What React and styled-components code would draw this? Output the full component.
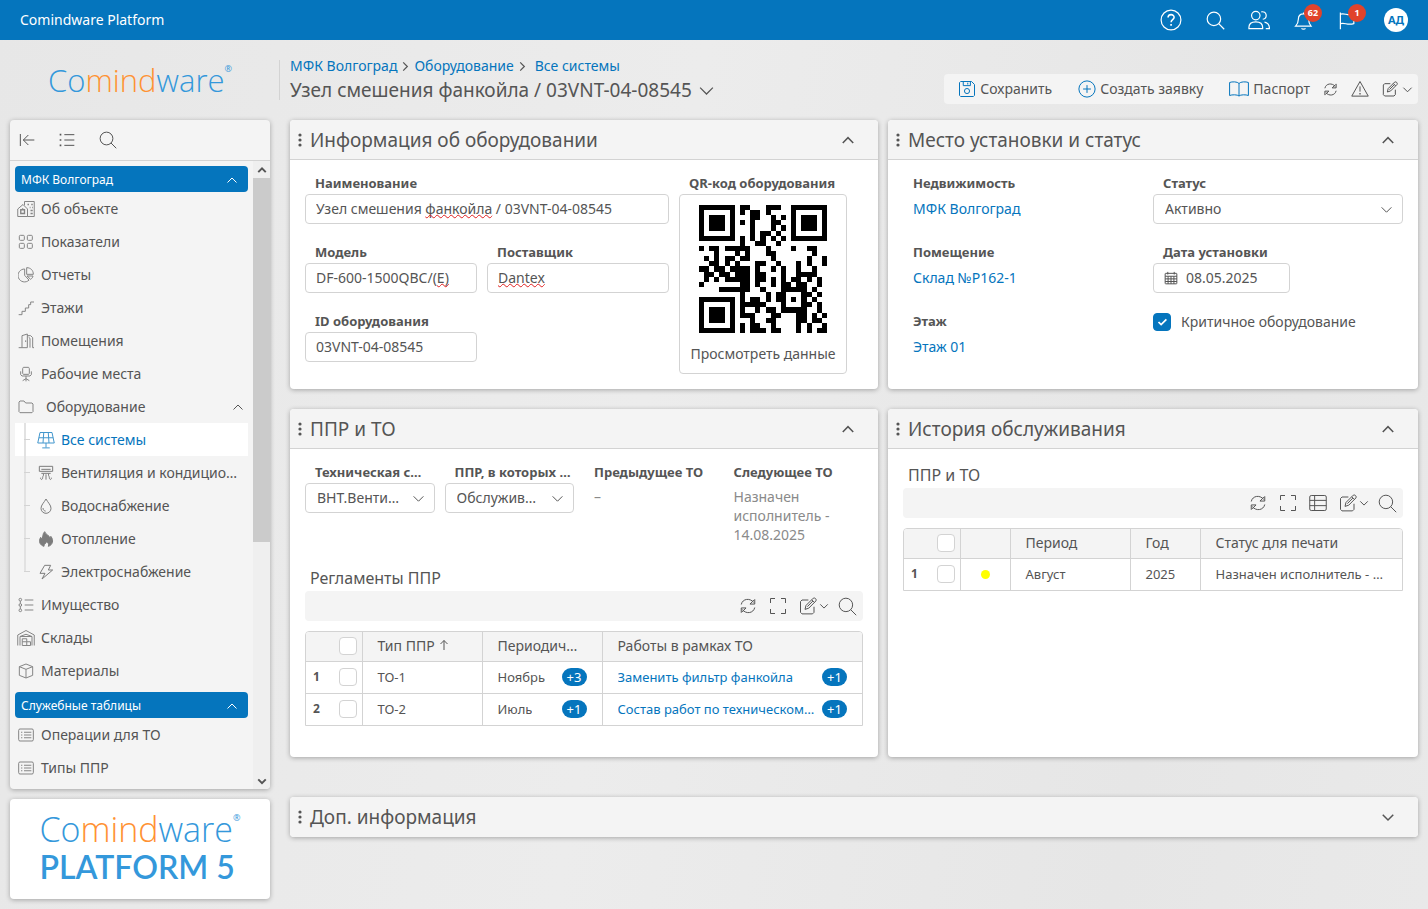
import styled, { createGlobalStyle, css } from 'styled-components';

const blue = '#0575bd';
const ink = '#555555';
const line = '#d3d3d3';
const soft = '#f4f4f4';
const font = '"Noto Sans", "Open Sans", sans-serif';

const iconPaths = {
  help: (
    <>
      <circle cx="12" cy="12" r="10.8" />
      <path d="M8.8 9.4c0-4.4 6.6-4.2 6.6-.4 0 2.6-3.3 2.6-3.3 5.4" strokeWidth="1.7" />
      <path d="M12.1 16.4v1.8" strokeWidth="1.8" />
    </>
  ),
  search: (
    <>
      <circle cx="10" cy="10" r="8.5" />
      <path d="M16 16l7 7" />
    </>
  ),
  users: (
    <>
      <circle cx="8.5" cy="7.2" r="4.6" />
      <path d="M1 21.5v-1.2C1 16 4 14 8.5 14s7.5 2 7.5 6.3v1.2zM14.5 3.2c6-1.6 7.4 6.8 1.6 8M18 14.4c3.6.6 5.4 2.8 5.4 7.1h-4" />
    </>
  ),
  bell: (
    <path d="M2 19h19.5c-2.2-2.6-3-4.6-3-8.6C18.5 6 16 3.6 12 3.6S5.5 6 5.5 10.4c0 4-1 6-3.5 8.6zM12 3.6V2M9.5 22c1 1.3 4 1.3 5 0" />
  ),
  flag: (
    <path d="M3 2v21M3 4c6-2 8 2.5 17 0v12c-9 2.5-11-2-17 0" />
  ),
  save: (
    <>
      <path d="M3.5 2H18l4 4v14.5L20.5 22h-17L2 20.5v-17z" />
      <path d="M7 2v5.5h9.5V2M13 3.5V6" />
      <circle cx="12" cy="14.7" r="3.4" />
    </>
  ),
  plus: (
    <>
      <circle cx="12" cy="12" r="10.8" />
      <path d="M12 6.8v10.4M6.8 12h10.4" />
    </>
  ),
  refresh: (
    <path d="M3 10C4.6 2.2 14.6.8 19.6 7.2M21 3v6.4h-6.4L20 4.2M21 14c-1.6 7.8-11.6 9.2-16.6 2.8M3 21v-6.4h6.4L4 19.8" />
  ),
  warning: (
    <>
      <path d="M12 2L23 21.5H1zM12 8.5v7" />
      <path d="M12 17.2v2" strokeWidth="1.8" />
    </>
  ),
  edit: (
    <>
      <path d="M12.5 4H4L2 6v14.5L4 22.5h14l2-2V13" />
      <path d="M8 16.5l1.3-5.2L19 1.6c2-1.3 5 1.6 3.6 3.6l-9.6 9.7zM17 3.8l3.5 3.5M18.5 5.4l-7.3 7.4" />
    </>
  ),
  expand: (
    <path d="M2 8V2h6M16 2h6v6M22 16v6h-6M8 22H2v-6" />
  ),
  grid: (
    <>
      <rect x="1" y="2" width="22" height="20" rx="2" />
      <path d="M1 8.5h22M1 15.5h22M7.5 2v20" />
    </>
  ),
  collapse: <path d="M2 3v18M23 12H6.5M14 4.5L6.5 12l7.5 7.5" />,
  list: (
    <>
      <path d="M8 4h15M8 12h15M8 20h15" />
      <path d="M1 4h2.5M1 12h2.5M1 20h2.5" strokeWidth="2.6" />
    </>
  ),
  building: (
    <>
      <path d="M1 22V12l7-6 6 6v10zM10 7V2h13v20h-9" />
      <path d="M5 13h5v5H5zM7.5 13v-2M14 6h2M19 6h2M17 10h1M20 10h1M18 14h3M18 18h3" strokeWidth="1.8" />
    </>
  ),
  tiles: (
    <>
      <rect x="2" y="2" width="7.5" height="7.5" rx="1.5" />
      <rect x="14" y="2" width="7.5" height="7.5" rx="1.5" />
      <rect x="2" y="14" width="7.5" height="7.5" rx="1.5" />
      <rect x="14" y="14" width="7.5" height="7.5" rx="1.5" />
    </>
  ),
  pie: (
    <path d="M10 3a9.7 9.7 0 1 0 6.5 16.7L10 12.5zM13 1v10h10C23 5 19 1 13 1zM13.5 13.5l5.5 5c2-1.5 3.2-3 3.5-5z" />
  ),
  stairs: <path d="M1 22h5v-5h5v-5h5V7h3V3h5" />,
  door: (
    <path d="M1 22h5V4l8-2.5V22H6M14 4h5l3 3v15h2M18 22V8l-2-1.5M11.5 11v2.5" />
  ),
  chair: (
    <path d="M8 2h8l1 2v7l-1 1.5H8L7 11V4zM4 8v5l2 2h12l2-2V8M12 15v8M7 22l5-3 5 3" />
  ),
  folder: (
    <path d="M1.5 19V4.5L3 3h6l2.5 3H21l1.5 1.5V19L21 20.5H3z" />
  ),
  solar: (
    <path d="M4 2h16l3 14H1zM2.5 9h19M9 2L8 16M15 2l1 14M12 16v6M7 22.5h10" />
  ),
  vent: (
    <path d="M2 2h20v7.5H2zM5 6.5h14M5 12.5h14M8 13c1 4-1 3-1 6 0 4-4 3-3 0M12 14v8M16 13c-1 4 1 3 1 6 0 4 4 3 3 0" />
  ),
  drop: (
    <path d="M12 1.5C9 7 4.5 10.5 4.5 15.5a7.5 7.5 0 0 0 15 0C19.5 10.5 15 7 12 1.5zM7.5 15c0 3 2 4.5 4 4.7" />
  ),
  fire: (
    <path
      d="M9 23C2.5 21 .5 15.5 4 9.5c.6 1.5 1.2 2 2 2.3C8 8 6.5 4.5 10 1c1 4 7 5.5 8 9.5.8-.8 1-1.5 1.2-2.5C24 14 22 21 15.5 23c1.5-3.5-.5-5-2.5-7-.5 2.5-4.5 3-4 7z"
      fill="currentColor"
    />
  ),
  bolt: <path d="M10 2h9l-3.5 7H22L6 22.5 10.5 14H3z" />,
  bullets: (
    <>
      <path d="M10 4.5h13M10 12h13M10 19.5h13" />
      <circle cx="3.5" cy="4" r="2" />
      <circle cx="3.5" cy="12" r="2" />
      <circle cx="3.5" cy="20" r="2" />
      <path d="M3.5 6v4M3.5 14v4" />
    </>
  ),
  warehouse: (
    <path d="M1 22V8l11-6 11 6v14M4 22V10h16v12M7 22v-9h6v4h5v5zM7 17h6v5M4 10l8-3 8 3" />
  ),
  box: (
    <path d="M12 1.5l10 4v13l-10 4-10-4v-13zM2 5.5l10 4 10-4M12 9.5v13" />
  ),
  record: (
    <>
      <rect x="1" y="3" width="22" height="18" rx="2" />
      <path d="M9 8h11M9 12h11M9 16h11M4.5 8h2M4.5 12h2M4.5 16h2" strokeWidth="1.6" />
    </>
  ),
  calendar: (
    <>
      <rect x="2" y="4" width="20" height="18" rx="1" />
      <path d="M2 9h20M2 13.5h20M2 18h20M7 9v13M12 9v13M17 9v13M6.5 1.5V6M17.5 1.5V6" />
    </>
  ),
  up: <path d="M3 17l9-9 9 9" />,
  down: <path d="M3 8l9 9 9-9" />,
  right: <path d="M7 3l9 9-9 9" />,
  sort: <path d="M12 22V3M5 10l7-7 7 7" />,
};

const Icon = ({ name, size = 16, weight = 1 }) => (
  <IconSvg
    viewBox="0 0 24 24"
    width={size}
    height={size}
    strokeWidth={(24 / size) * weight}
    aria-hidden="true"
  >
    {iconPaths[name]}
  </IconSvg>
);

const BookIcon = () => (
  <IconSvg viewBox="0 0 20 16" width="20" height="16" strokeWidth="1" aria-hidden="true">
    <path d="M10 2.5C8.5.5 3 .5 .6 1.5v13c2.4-1 7.9-1 9.4.5 1.5-1.5 7-1.5 9.4-.5v-13C17 .5 11.5.5 10 2.5zM10 2.5V15" />
  </IconSvg>
);

const qrRows = [
  '1111111011000111001111111',
  '1000001010110100001000001',
  '1011101000110010101011101',
  '1011101010100011001011101',
  '1011101000100010101011101',
  '1000001000101101001000001',
  '1111111010101010101111111',
  '0000000010011001000000000',
  '1011011111000100001001100',
  '0001000101000110000000100',
  '0101011011000010000001001',
  '0011010100011001000101001',
  '1101101111010010100100100',
  '0110110111011000100111100',
  '0101011111011010101101010',
  '1000000011010010110110010',
  '0000111111001000111110100',
  '0000000010000101100011010',
  '1111111010110101101010100',
  '1000001011111000100011010',
  '1011101010010110111110010',
  '1011101011100011000110101',
  '1011101000100110000110110',
  '1000001010110010000101001',
  '1111111010111011000101011',
];

const QrCode = () => (
  <svg
    viewBox="0 0 25 25"
    width="128"
    height="128"
    shapeRendering="crispEdges"
    role="img"
    aria-label="QR-код оборудования"
  >
    {qrRows.map((row, y) =>
      [...row].map((cell, x) =>
        cell === '1' ? <rect key={`${x}-${y}`} x={x} y={y} width="1" height="1" /> : null
      )
    )}
  </svg>
);

const Brand = ({ platform }) => (
  <BrandBox $large={platform}>
    <BrandWord>
      Co<b>mind</b>ware<sup>®</sup>
    </BrandWord>
    {platform && <BrandProduct>PLATFORM 5</BrandProduct>}
  </BrandBox>
);

const objectItems = [
  { icon: 'building', text: 'Об объекте', size: 18 },
  { icon: 'tiles', text: 'Показатели' },
  { icon: 'pie', text: 'Отчеты' },
  { icon: 'stairs', text: 'Этажи' },
  { icon: 'door', text: 'Помещения' },
  { icon: 'chair', text: 'Рабочие места' },
];

const systemItems = [
  { icon: 'solar', text: 'Все системы', active: true, size: 18 },
  { icon: 'vent', text: 'Вентиляция и кондиционирование' },
  { icon: 'drop', text: 'Водоснабжение' },
  { icon: 'fire', text: 'Отопление' },
  { icon: 'bolt', text: 'Электроснабжение' },
];

const stockItems = [
  { icon: 'bullets', text: 'Имущество' },
  { icon: 'warehouse', text: 'Склады', size: 18 },
  { icon: 'box', text: 'Материалы' },
];

const serviceItems = [
  { icon: 'record', text: 'Операции для ТО' },
  { icon: 'record', text: 'Типы ППР' },
];

const NavList = ({ items }) =>
  items.map(({ icon, text, size = 16 }) => (
    <NavItem href="#" key={text}>
      <NavIcon>
        <Icon name={icon} size={size} />
      </NavIcon>
      {text}
    </NavItem>
  ));

const Sidebar = () => (
  <Side>
    <LogoBox>
      <Brand />
    </LogoBox>
    <NavCard>
      <NavTools>
        <IconButton aria-label="Свернуть"><Icon name="collapse" size={16} /></IconButton>
        <IconButton aria-label="Список"><Icon name="list" size={16} /></IconButton>
        <IconButton aria-label="Поиск"><Icon name="search" size={18} /></IconButton>
      </NavTools>
      <NavBody>
        <NavScroll>
          <GroupButton>МФК Волгоград<Icon name="up" size={12} /></GroupButton>
          <NavList items={objectItems} />
          <FolderButton>
            <NavIcon><Icon name="folder" size={16} /></NavIcon>
            <span>Оборудование</span>
            <Icon name="up" size={12} />
          </FolderButton>
          <Tree>
            {systemItems.map(({ icon, text, active, size = 16 }) => (
              <TreeItem href="#" key={text} $active={active}>
                <TreeIcon><Icon name={icon} size={size} /></TreeIcon>
                <Clip>{text}</Clip>
              </TreeItem>
            ))}
          </Tree>
          <NavList items={stockItems} />
          <GroupButton>Служебные таблицы<Icon name="up" size={12} /></GroupButton>
          <NavList items={serviceItems} />
        </NavScroll>
        <Track>
          <Arrow><Icon name="up" size={10} weight={2} /></Arrow>
          <Thumb />
          <Arrow><Icon name="down" size={10} weight={2} /></Arrow>
        </Track>
      </NavBody>
    </NavCard>
    <PlatformCard>
      <Brand platform />
    </PlatformCard>
  </Side>
);

const Dots = () => (
  <svg width="4" height="14" viewBox="0 0 4 14" fill={ink} aria-hidden="true">
    <circle cx="2" cy="2" r="1.6" />
    <circle cx="2" cy="7" r="1.6" />
    <circle cx="2" cy="12" r="1.6" />
  </svg>
);

const Panel = ({ title, closed, children }) => (
  <PanelBox>
    <PanelHead $closed={closed}>
      <Dots />
      <PanelTitle>{title}</PanelTitle>
      <IconButton aria-label={closed ? 'Развернуть' : 'Свернуть'}>
        <Icon name={closed ? 'down' : 'up'} size={14} weight={1.5} />
      </IconButton>
    </PanelHead>
    {children}
  </PanelBox>
);

const TextField = ({ id, label, value, area, misspelled }) => (
  <Field $area={area}>
    <Label htmlFor={id}>{label}</Label>
    <InputWrap>
      <TextInput id={id} defaultValue={value} spellCheck="false" />
      {misspelled && (
        <Spelling aria-hidden="true">
          {misspelled[0]}
          <Wavy>{misspelled[1]}</Wavy>
        </Spelling>
      )}
    </InputWrap>
  </Field>
);

const SelectField = ({ id, label, value, wide }) => (
  <Field>
    <Label htmlFor={id} $wide={wide}>{label}</Label>
    <InputWrap>
      <Select id={id} defaultValue={value}>
        <option>{value}</option>
      </Select>
      <SelectArrow><Icon name="down" size={13} /></SelectArrow>
    </InputWrap>
  </Field>
);

const LinkField = ({ label, value }) => (
  <Field>
    <Label as="span">{label}</Label>
    <ValueLink href="#">{value}</ValueLink>
  </Field>
);

const EquipmentPanel = () => (
  <Panel title="Информация об оборудовании">
    <EquipmentBody>
      <EquipmentFields>
        <TextField
          id="name"
          area="name"
          label="Наименование"
          value="Узел смешения фанкойла / 03VNT-04-08545"
          misspelled={['Узел смешения ', 'фанкойла']}
        />
        <TextField
          id="model"
          area="model"
          label="Модель"
          value="DF-600-1500QBC/(E)"
          misspelled={['DF-600-1500QBC/(', 'E)']}
        />
        <TextField
          id="vendor"
          area="vendor"
          label="Поставщик"
          value="Dantex"
          misspelled={['', 'Dantex']}
        />
        <TextField id="code" area="code" label="ID оборудования" value="03VNT-04-08545" />
      </EquipmentFields>
      <Field>
        <Label as="span">QR-код оборудования</Label>
        <QrCard href="#">
          <QrCode />
          Просмотреть данные
        </QrCard>
      </Field>
    </EquipmentBody>
  </Panel>
);

const PlacePanel = () => (
  <Panel title="Место установки и статус">
    <PlaceBody>
      <FieldStack>
        <LinkField label="Недвижимость" value="МФК Волгоград" />
        <LinkField label="Помещение" value="Склад №Р162-1" />
        <LinkField label="Этаж" value="Этаж 01" />
      </FieldStack>
      <FieldStack>
        <SelectField id="status" label="Статус" value="Активно" />
        <Field>
          <Label htmlFor="date">Дата установки</Label>
          <DateBox>
            <Icon name="calendar" size={14} />
            <DateInput id="date" defaultValue="08.05.2025" />
          </DateBox>
        </Field>
        <CheckRow>
          <Checkbox type="checkbox" defaultChecked />
          Критичное оборудование
        </CheckRow>
      </FieldStack>
    </PlaceBody>
  </Panel>
);

const Tools = ({ withGrid }) => (
  <TableTools>
    <IconButton aria-label="Обновить"><Icon name="refresh" size={18} /></IconButton>
    <IconButton aria-label="Во весь экран"><Icon name="expand" size={18} /></IconButton>
    {withGrid && <IconButton aria-label="Таблица"><Icon name="grid" size={18} /></IconButton>}
    <IconButton aria-label="Правка">
      <Icon name="edit" size={18} />
      <Icon name="down" size={10} />
    </IconButton>
    <SearchButton aria-label="Поиск"><Icon name="search" size={19} /></SearchButton>
  </TableTools>
);

const rules = [
  { type: 'ТО-1', month: 'Ноябрь', more: '+3', work: 'Заменить фильтр фанкойла' },
  { type: 'ТО-2', month: 'Июль', more: '+1', work: 'Состав работ по техническому обслуживанию' },
];

const ServicePanel = () => (
  <Panel title="ППР и ТО">
    <PanelBody>
      <FourFields>
        <SelectField id="system" label="Техническая система" value="ВНТ.Вентиляция" />
        <SelectField id="plan" label="ППР, в которых участвует" value="Обслуживание" wide />
        <Field>
          <Label as="span">Предыдущее ТО</Label>
          <Note>–</Note>
        </Field>
        <Field>
          <Label as="span">Следующее ТО</Label>
          <Note>Назначен исполнитель - 14.08.2025</Note>
        </Field>
      </FourFields>
      <TableTitle>Регламенты ППР</TableTitle>
      <Tools />
      <TableFrame>
        <Table>
          <colgroup>
            <col width="56" />
            <col width="120" />
            <col width="120" />
            <col />
          </colgroup>
          <thead>
            <tr>
              <Th><RowHead><Checkbox type="checkbox" aria-label="Выбрать все" /></RowHead></Th>
              <Th>Тип ППР <Icon name="sort" size={12} /></Th>
              <Th>Периодичность</Th>
              <Th>Работы в рамках ТО</Th>
            </tr>
          </thead>
          <tbody>
            {rules.map(({ type, month, more, work }, i) => (
              <tr key={type}>
                <Td>
                  <RowHead>
                    <b>{i + 1}</b>
                    <Checkbox type="checkbox" aria-label={`Выбрать ${type}`} />
                  </RowHead>
                </Td>
                <Td>{type}</Td>
                <Td><Multi><Clip>{month}</Clip><More>{more}</More></Multi></Td>
                <Td><Multi><CellLink href="#">{work}</CellLink><More>+1</More></Multi></Td>
              </tr>
            ))}
          </tbody>
        </Table>
      </TableFrame>
    </PanelBody>
  </Panel>
);

const HistoryPanel = () => (
  <Panel title="История обслуживания">
    <PanelBody>
      <TableTitle>ППР и ТО</TableTitle>
      <Tools withGrid />
      <TableFrame>
        <Table>
          <colgroup>
            <col width="56" />
            <col width="50" />
            <col width="120" />
            <col width="70" />
            <col />
          </colgroup>
          <thead>
            <tr>
              <Th><RowHead><Checkbox type="checkbox" aria-label="Выбрать все" /></RowHead></Th>
              <Th />
              <Th>Период</Th>
              <Th>Год</Th>
              <Th>Статус для печати</Th>
            </tr>
          </thead>
          <tbody>
            <tr>
              <Td>
                <RowHead>
                  <b>1</b>
                  <Checkbox type="checkbox" aria-label="Выбрать Август" />
                </RowHead>
              </Td>
              <Td><Mark /></Td>
              <Td>Август</Td>
              <Td>2025</Td>
              <Td>Назначен исполнитель - 14.08.2025</Td>
            </tr>
          </tbody>
        </Table>
      </TableFrame>
    </PanelBody>
  </Panel>
);

const App = () => {
  return (
    <>
      <GlobalStyle />
      <TopBar>
        <span>Comindware Platform</span>
        <TopActions>
          <TopButton aria-label="Справка"><Icon name="help" size={22} weight={1.2} /></TopButton>
          <TopButton aria-label="Поиск"><Icon name="search" size={19} weight={1.2} /></TopButton>
          <TopButton aria-label="Пользователи"><Icon name="users" size={22} weight={1.2} /></TopButton>
          <TopButton aria-label="Уведомления">
            <Icon name="bell" size={19} weight={1.2} />
            <Badge>62</Badge>
          </TopButton>
          <TopButton aria-label="Задачи">
            <Icon name="flag" size={19} weight={1.2} />
            <Badge>1</Badge>
          </TopButton>
          <Avatar>АД</Avatar>
        </TopActions>
      </TopBar>
      <Page>
        <Sidebar />
        <Main>
          <PageHead>
            <div>
              <Crumbs>
                <a href="#">МФК Волгоград</a>
                <Icon name="right" size={11} weight={1.2} />
                <a href="#">Оборудование</a>
                <Icon name="right" size={11} weight={1.2} />
                <a href="#">Все системы</a>
              </Crumbs>
              <PageTitle>
                Узел смешения фанкойла / 03VNT-04-08545
                <Icon name="down" size={17} weight={1.2} />
              </PageTitle>
            </div>
            <ActionBar>
              <ActionButton><Icon name="save" size={18} />Сохранить</ActionButton>
              <ActionButton><Icon name="plus" size={18} />Создать заявку</ActionButton>
              <ActionButton><BookIcon />Паспорт</ActionButton>
              <ActionTools>
                <IconButton aria-label="Обновить"><Icon name="refresh" size={15} /></IconButton>
                <IconButton aria-label="Предупреждения"><Icon name="warning" size={18} /></IconButton>
                <IconButton aria-label="Правка">
                  <Icon name="edit" size={16} />
                  <Icon name="down" size={11} />
                </IconButton>
              </ActionTools>
            </ActionBar>
          </PageHead>
          <Panels>
            <EquipmentPanel />
            <PlacePanel />
            <ServicePanel />
            <HistoryPanel />
          </Panels>
          <Panel title="Доп. информация" closed />
        </Main>
      </Page>
    </>
  );
};

export default App;


const GlobalStyle = createGlobalStyle`
  * {
    box-sizing: border-box;
  }

  body {
    margin: 0;
    min-height: 100vh;
    background: linear-gradient(100deg, #e7e7e7 0%, #ececec 45%, #e6e6e6 80%, #e9e9e9 100%);
    color: ${ink};
    font: 14px/20px ${font};
  }

  button,
  input,
  select {
    color: inherit;
    font: inherit;
  }

  a {
    color: ${blue};
    text-decoration: none;
  }
`;

const ellipsis = css`
  overflow: hidden;
  text-overflow: ellipsis;
  white-space: nowrap;
`;

const IconSvg = styled.svg`
  flex: none;
  fill: none;
  stroke: currentColor;
`;

const Clip = styled.span`
  ${ellipsis}
  min-width: 0;
`;

const IconButton = styled.button`
  position: relative;
  display: flex;
  align-items: center;
  padding: 0;
  border: 0;
  background: none;
  cursor: pointer;
`;

const TopBar = styled.header`
  display: flex;
  align-items: center;
  justify-content: space-between;
  height: 40px;
  padding: 0 20px;
  background: ${blue};
  color: #fff;
`;

const TopActions = styled.div`
  display: flex;
  align-items: center;
  gap: 22px;
`;

const TopButton = styled(IconButton)`
  justify-content: center;
  width: 22px;
  height: 22px;
`;

const Badge = styled.span`
  position: absolute;
  top: -5px;
  left: 12px;
  width: 18px;
  height: 18px;
  border-radius: 9px;
  background: #e0432b;
  font-size: 9px;
  font-weight: 700;
  line-height: 18px;
  text-align: center;
`;

const Avatar = styled.span`
  width: 24px;
  height: 24px;
  margin-left: 4px;
  border-radius: 50%;
  background: #fff;
  color: ${blue};
  font-size: 11px;
  font-weight: 700;
  line-height: 24px;
  text-align: center;
`;

const Page = styled.div`
  display: grid;
  grid-template-columns: 260px minmax(0, 1fr);
  column-gap: 10px;
  padding: 0 10px 10px;
`;

const Side = styled.aside`
  display: flex;
  flex-direction: column;
  height: calc(100vh - 50px);
`;

const card = css`
  border-radius: 4px;
  box-shadow: 0 1px 5px rgba(0, 0, 0, 0.3);
`;

const LogoBox = styled.div`
  display: flex;
  flex: none;
  align-items: center;
  justify-content: center;
  height: 80px;
`;

const BrandBox = styled.div`
  color: #3498db;
  font-family: "Open Sans", sans-serif;
  font-size: ${({ $large }) => ($large ? 34 : 31)}px;
`;

const BrandWord = styled.div`
  display: flex;
  font-weight: 350;
  line-height: 36px;

  b {
    color: #ff9233;
    font-weight: 350;
  }

  sup {
    font-size: 9px;
    font-weight: 400;
    line-height: 14px;
  }
`;

const BrandProduct = styled.div`
  font-family: Lato, sans-serif;
  font-size: 32px;
  font-weight: 600;
  line-height: 40px;
`;

const NavCard = styled.nav`
  ${card}
  display: flex;
  flex: 1;
  flex-direction: column;
  min-height: 0;
  overflow: hidden;
  background: ${soft};
`;

const NavTools = styled.div`
  display: flex;
  flex: none;
  align-items: center;
  gap: 24px;
  height: 41px;
  padding: 0 9px;
  border-bottom: 1px solid ${line};
`;

const NavBody = styled.div`
  display: flex;
  flex: 1;
  min-height: 0;
`;

const NavScroll = styled.div`
  flex: 1;
  min-width: 0;
  overflow: hidden;
  padding: 5px;
`;

const Track = styled.div`
  display: flex;
  flex-direction: column;
  width: 17px;
  background: #efefef;
`;

const Arrow = styled.span`
  display: flex;
  flex: none;
  align-items: center;
  justify-content: center;
  height: 17px;
`;

const Thumb = styled.div`
  flex: 0 0 58%;
  margin-bottom: auto;
  background: #cbcbcb;
`;

const GroupButton = styled.button`
  display: flex;
  align-items: center;
  justify-content: space-between;
  width: 100%;
  height: 26px;
  margin: 0;
  padding: 2px 10px 0 6px;
  border: 0;
  border-radius: 4px;
  background: ${blue};
  color: #fff;
  font-size: 12px;

  a + & {
    margin-top: 5px;
  }
`;

const row = css`
  display: flex;
  align-items: center;
  height: 33px;
  color: ${ink};
`;

const NavItem = styled.a`
  ${row}
  gap: 5px;
`;

const NavIcon = styled.span`
  display: flex;
  flex: none;
  justify-content: center;
  width: 21px;
  color: #858585;
`;

const FolderButton = styled.button`
  ${row}
  gap: 10px;
  width: 100%;
  padding: 0 4px 0 0;
  border: 0;
  background: none;

  span + svg {
    margin-left: auto;
  }
`;

const Tree = styled.div`
  display: flex;
  flex-direction: column;
`;

const TreeItem = styled.a`
  ${row}
  position: relative;
  gap: 5px;
  padding: 0 8px 0 20px;
  background: ${({ $active }) => ($active ? '#fff' : 'none')};
  color: ${({ $active }) => ($active ? blue : ink)};

  &::before {
    content: '';
    position: absolute;
    top: 0;
    bottom: 0;
    left: 9px;
    border-left: 2px solid #e2e2e2;
  }

  &::after {
    content: '';
    position: absolute;
    top: 16px;
    left: 9px;
    width: 6px;
    border-top: 1px solid ${line};
  }

  &:last-child::before {
    bottom: 16px;
  }
`;

const TreeIcon = styled(NavIcon)`
  color: inherit;
  opacity: 0.75;
`;

const PlatformCard = styled.div`
  ${card}
  display: flex;
  flex: none;
  align-items: center;
  justify-content: center;
  height: 100px;
  margin-top: 10px;
  background: #fff;
`;

const Main = styled.main`
  min-width: 0;
  padding-left: 10px;
`;

const PageHead = styled.div`
  position: relative;
  display: flex;
  align-items: flex-end;
  justify-content: space-between;
  height: 80px;
  padding-bottom: 16px;

  &::before {
    content: '';
    position: absolute;
    top: 20px;
    bottom: 20px;
    left: -11px;
    border-left: 1px solid ${line};
  }
`;

const Crumbs = styled.nav`
  display: flex;
  align-items: center;
  gap: 3px;
  height: 20px;

  a:last-child {
    margin-left: 4px;
  }
`;

const PageTitle = styled.h1`
  display: flex;
  align-items: center;
  gap: 6px;
  margin: 0;
  font-size: 19px;
  font-weight: 400;
  line-height: 28px;
`;

const ActionBar = styled.div`
  display: flex;
  align-items: center;
  gap: 26px;
  height: 30px;
  padding: 0 5px 0 14px;
  border-radius: 4px;
  background: ${soft};
`;

const ActionButton = styled.button`
  display: flex;
  align-items: center;
  gap: 4px;
  padding: 0;
  border: 0;
  background: none;

  svg {
    color: ${blue};
  }
`;

const ActionTools = styled.div`
  display: flex;
  align-items: center;
  gap: 13px;
  margin-left: -13px;

  button {
    gap: 4px;
  }
`;

const Panels = styled.div`
  display: grid;
  grid-template-columns: minmax(0, 588fr) minmax(0, 530fr);
  grid-template-rows: minmax(269px, auto) minmax(348px, auto);
  gap: 20px 10px;
  margin-bottom: 40px;
`;

const PanelBox = styled.section`
  ${card}
  overflow: hidden;
  background: #fff;
`;

const PanelHead = styled.div`
  display: flex;
  align-items: center;
  gap: 8px;
  height: 40px;
  padding: 0 23px 0 8px;
  border-bottom: ${({ $closed }) => ($closed ? 0 : 1)}px solid ${line};
  background: ${soft};
`;

const PanelTitle = styled.h2`
  flex: 1;
  margin: 0;
  font-size: 19px;
  font-weight: 400;
  line-height: 26px;
`;

const PanelBody = styled.div`
  padding: 15px;
`;

const EquipmentBody = styled.div`
  display: grid;
  grid-template-columns: minmax(0, 1fr) 168px;
  gap: 10px;
  padding: 15px 31px 15px 15px;
`;

const EquipmentFields = styled.div`
  display: grid;
  grid-template: 'name name' 'model vendor' 'code .' / minmax(0, 172fr) minmax(0, 182fr);
  align-content: start;
  gap: 20px 10px;
`;

const Field = styled.div`
  display: flex;
  flex-direction: column;
  grid-area: ${({ $area }) => $area || 'auto'};
  min-width: 0;
`;

const Label = styled.label`
  ${ellipsis}
  height: 19px;
  padding: 0 ${({ $wide }) => ($wide ? 0 : 10)}px 0 10px;
  font-size: 13px;
  font-weight: 700;
  line-height: 16px;
`;

const InputWrap = styled.div`
  position: relative;
`;

const control = css`
  width: 100%;
  height: 30px;
  padding: 0 10px;
  border: 1px solid ${line};
  border-radius: 4px;
  background: #fff;
`;

const TextInput = styled.input`
  ${control}
  display: block;
  padding-bottom: 2px;
`;

const Spelling = styled.span`
  position: absolute;
  top: 4px;
  left: 11px;
  color: transparent;
  white-space: pre;
  pointer-events: none;
`;

const Wavy = styled.span`
  text-decoration: underline wavy #e02020 1px;
  text-decoration-skip-ink: none;
`;

const Select = styled.select`
  ${control}
  ${ellipsis}
  display: block;
  padding-right: 32px;
  padding-left: 11px;
  appearance: none;
`;

const SelectArrow = styled.span`
  position: absolute;
  top: 0;
  right: 10px;
  display: flex;
  align-items: center;
  height: 30px;
  pointer-events: none;
`;

const QrCard = styled.a`
  display: flex;
  flex-direction: column;
  align-items: center;
  gap: 11px;
  height: 180px;
  padding-top: 10px;
  border: 1px solid ${line};
  border-radius: 4px;
  color: ${ink};
`;

const PlaceBody = styled.div`
  display: grid;
  grid-template-columns: repeat(2, minmax(0, 1fr));
  padding: 15px;
`;

const FieldStack = styled.div`
  display: flex;
  flex-direction: column;
  gap: 20px;
`;

const ValueLink = styled.a`
  padding-left: 10px;
  line-height: 30px;
`;

const DateBox = styled.div`
  ${control}
  display: flex;
  align-items: center;
  gap: 8px;
  width: 137px;
`;

const DateInput = styled.input`
  width: 90px;
  padding: 0;
  border: 0;
  outline: 0;
`;

const CheckRow = styled.label`
  display: flex;
  align-items: center;
  gap: 10px;
  height: 18px;
`;

const tick = encodeURIComponent(
  '<svg xmlns="http://www.w3.org/2000/svg" viewBox="0 0 16 16" fill="none" stroke="#fff" stroke-width="2"><path d="M4 8l3 3 6-6"/></svg>'
);

const Checkbox = styled.input`
  flex: none;
  width: 18px;
  height: 18px;
  margin: 0;
  border: 1px solid ${line};
  border-radius: 4px;
  background: #fff;
  appearance: none;

  &:checked {
    border-color: ${blue};
    background: ${blue} url("data:image/svg+xml,${tick}") center / 14px;
  }
`;

const FourFields = styled.div`
  display: grid;
  grid-template-columns: repeat(4, minmax(0, 1fr));
  gap: 10px;
  min-height: 103px;
  padding-right: 10px;
`;

const Note = styled.span`
  padding: 4px 10px;
  color: #8a8a8a;
  line-height: 19px;
`;

const TableTitle = styled.h3`
  margin: 0;
  padding: 0 5px 2px;
  font-size: 16px;
  font-weight: 400;
  line-height: 22px;
`;

const TableTools = styled.div`
  display: flex;
  align-items: center;
  justify-content: flex-end;
  gap: 12px;
  height: 30px;
  margin-bottom: 10px;
  padding: 0 6px;
  border-radius: 4px;
  background: ${soft};

  button {
    gap: 2px;
  }
`;

const SearchButton = styled(IconButton)`
  margin-left: -3px;
`;

const TableFrame = styled.div`
  overflow: hidden;
  border: 1px solid ${line};
  border-radius: 4px 4px 0 0;
`;

const Table = styled.table`
  width: 100%;
  border-collapse: collapse;
  table-layout: fixed;
`;

const cell = css`
  ${ellipsis}
  padding: 0 15px;
  border-left: 1px solid ${line};
  font-weight: 400;
  text-align: left;

  &:first-child {
    padding: 0 5px 0 7px;
    border-left: 0;
  }
`;

const Th = styled.th`
  ${cell}
  height: 29px;
  padding-right: 22px;
  background: ${soft};
`;

const Td = styled.td`
  ${cell}
  height: 32px;
  border-top: 1px solid ${line};
  font-size: 13px;
`;

const RowHead = styled.div`
  display: flex;
  align-items: center;
  justify-content: space-between;
  font-size: 12px;

  input {
    margin-left: auto;
  }
`;

const Multi = styled.div`
  display: flex;
  align-items: center;
  justify-content: space-between;
  gap: 5px;
`;

const CellLink = styled.a`
  ${ellipsis}
  min-width: 0;
`;

const More = styled.span`
  flex: none;
  width: 25px;
  height: 18px;
  border-radius: 9px;
  background: ${blue};
  color: #fff;
  line-height: 18px;
  text-align: center;
`;

const Mark = styled.span`
  display: block;
  width: 9px;
  height: 9px;
  margin: 0 auto;
  border-radius: 50%;
  background: #ff0;
`;
